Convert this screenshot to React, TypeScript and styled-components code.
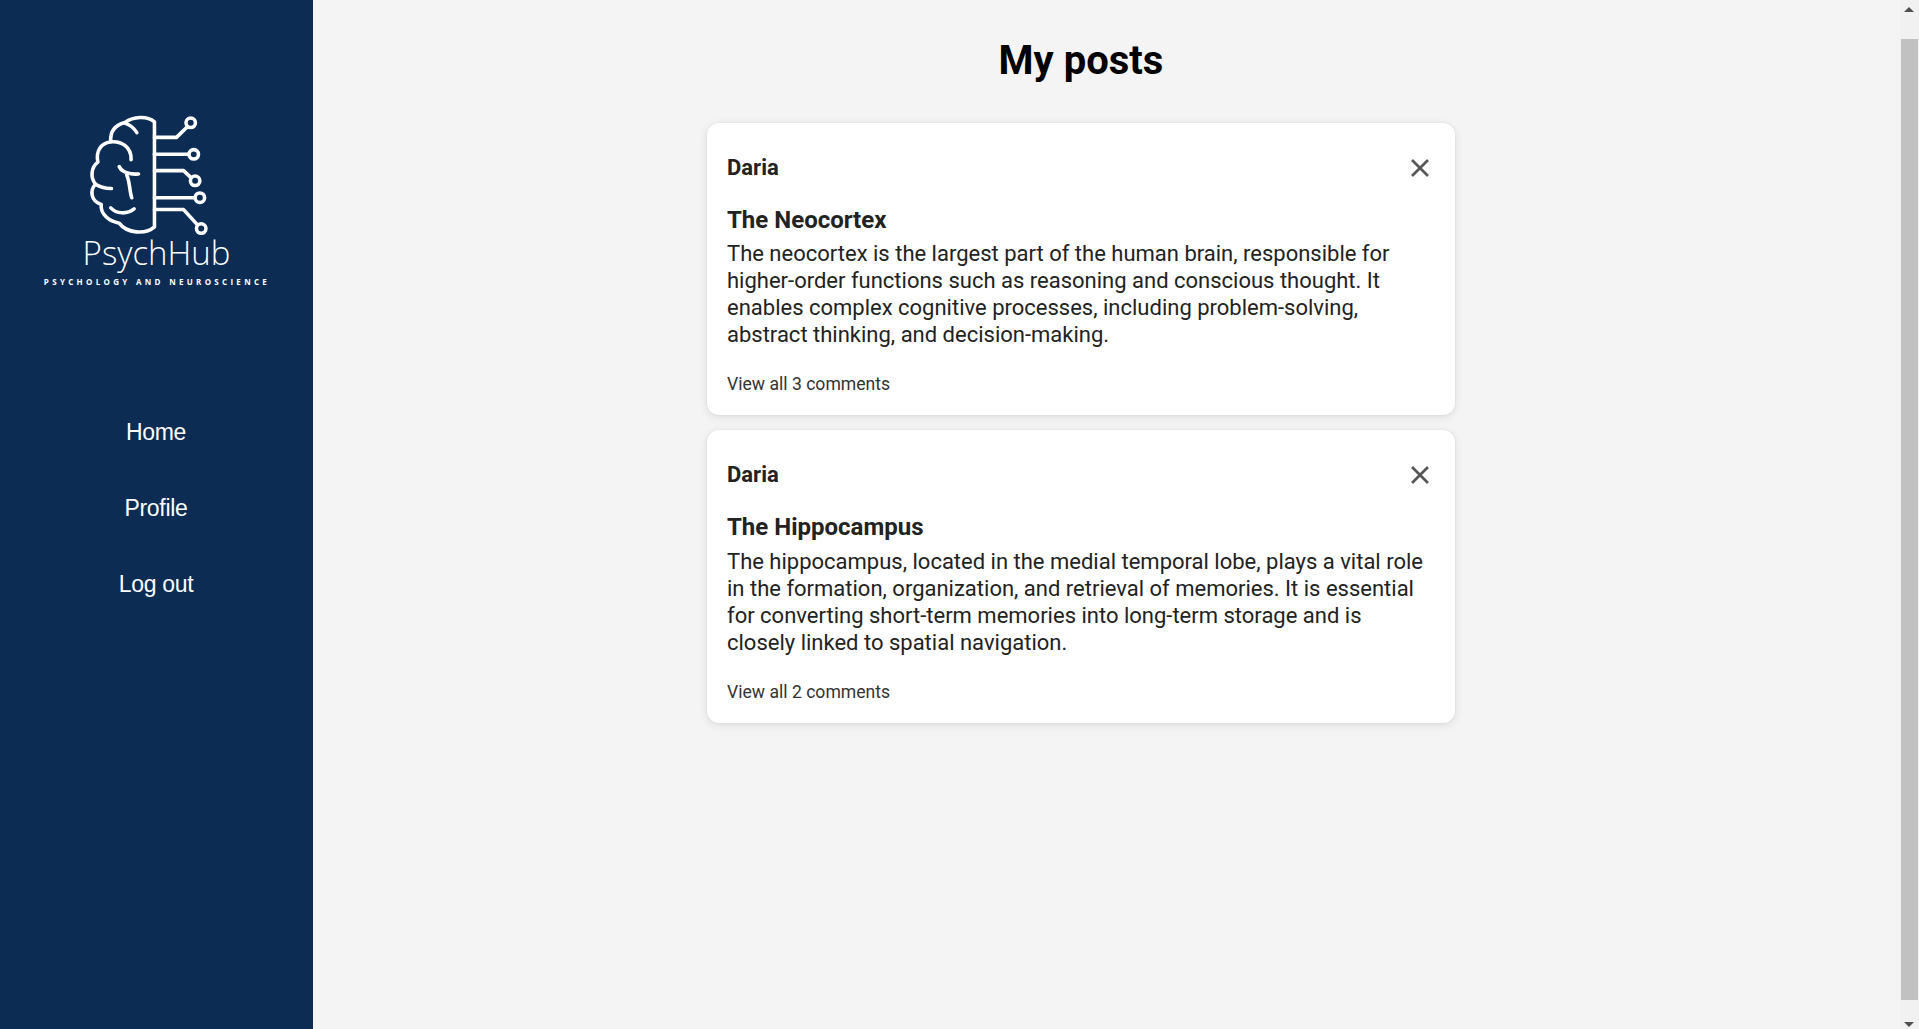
import { createGlobalStyle } from 'styled-components'
import styled from 'styled-components'

const GlobalStyle = createGlobalStyle`
  html, body {
    margin: 0;
    padding: 0;
    height: 100%;
    overflow: hidden;
    background: #f4f4f4;
  }
  * {
    box-sizing: border-box;
  }
`

const Page = styled.div`
  display: flex;
  width: 100%;
  height: 1029px;
  background: #f4f4f4;
`

const Sidebar = styled.aside`
  width: 313px;
  flex-shrink: 0;
  background: #0c2c54;
  display: flex;
  flex-direction: column;
  align-items: center;
  padding-top: 113px;
`

const Logo = styled.div`
  display: flex;
  flex-direction: column;
  align-items: center;
  color: #fff;
`

const Brain = styled.svg`
  width: 122px;
  height: 122px;
  margin-left: -20px;
`

const LogoName = styled.span`
  font-family: 'Open Sans', sans-serif;
  font-size: 33px;
  font-weight: 300;
  line-height: 40px;
  margin-top: -2px;
`

const LogoTag = styled.span`
  font-family: 'Open Sans', sans-serif;
  font-size: 8px;
  font-weight: 700;
  line-height: 12px;
  letter-spacing: 3.3px;
  margin: 3px 0 0 1px;
  white-space: nowrap;
`

const Nav = styled.nav`
  display: flex;
  flex-direction: column;
  align-items: center;
  gap: 50px;
  margin: 131px 1px 0 0;
`

const NavLink = styled.a`
  font-family: 'Liberation Sans', Arial, sans-serif;
  font-size: 23px;
  letter-spacing: -0.3px;
  line-height: 26px;
  color: #fff;
  cursor: pointer;
`

const Main = styled.main`
  flex: 1;
  display: flex;
  flex-direction: column;
  align-items: center;
  padding: 37px 51px 0 0;
`

const Title = styled.h1`
  font-family: Roboto, sans-serif;
  font-size: 40px;
  font-weight: 700;
  line-height: 47px;
  margin: 0 0 39px;
  color: #000;
`

const Posts = styled.div`
  display: flex;
  flex-direction: column;
  gap: 15px;
  width: 748px;
`

const Card = styled.article`
  background: #fff;
  border-radius: 12px;
  box-shadow: 0 2px 10px rgba(0, 0, 0, 0.1), 0 0 2px rgba(0, 0, 0, 0.08);
  padding: 20px;
  font-family: Roboto, sans-serif;
`

const CardHead = styled.div`
  display: flex;
  justify-content: space-between;
  align-items: center;
  height: 50px;
  margin-bottom: 13px;
`

const Author = styled.span`
  font-size: 22px;
  font-weight: 700;
  color: #222;
  margin-bottom: 2px;
`

const CloseButton = styled.button`
  border: none;
  background: none;
  padding: 0;
  display: flex;
  width: 30px;
  height: 30px;
  color: #555;
  cursor: pointer;
`

const PostTitle = styled.h2`
  font-size: 24px;
  font-weight: 700;
  line-height: 29px;
  color: #222;
  margin: 0 0 5.4px;
`

const PostBody = styled.p`
  font-size: 22px;
  line-height: 27px;
  color: #222;
  margin: 0 0 25px;
`

const Comments = styled.a`
  display: block;
  font-size: 17.6px;
  line-height: 22px;
  color: #333;
  cursor: pointer;
`

const Scrollbar = styled.div`
  width: 19px;
  flex-shrink: 0;
  background: #f1f1f1;
  display: flex;
  flex-direction: column;
  align-items: center;
  padding-right: 1px;
`

const ScrollArrow = styled.div<{ $down?: boolean }>`
  width: 0;
  height: 0;
  border-left: 5px solid transparent;
  border-right: 5px solid transparent;
  ${p => (p.$down ? 'border-top: 5px solid #505050;' : 'border-bottom: 5px solid #505050;')}
  margin: ${p => (p.$down ? '0 0 2px' : '7px 0 0')};
`

const ScrollThumb = styled.div`
  width: 17px;
  height: 961px;
  background: #c1c1c1;
  margin: 27px 0 auto;
`

const posts = [
  {
    title: 'The Neocortex',
    body: 'The neocortex is the largest part of the human brain, responsible for higher-order functions such as reasoning and conscious thought. It enables complex cognitive processes, including problem-solving, abstract thinking, and decision-making.',
    comments: 3,
  },
  {
    title: 'The Hippocampus',
    body: 'The hippocampus, located in the medial temporal lobe, plays a vital role in the formation, organization, and retrieval of memories. It is essential for converting short-term memories into long-term storage and is closely linked to spatial navigation.',
    comments: 2,
  },
]

const BrainLogo = () => (
  <Brain viewBox="170 40 360 360" fill="none" stroke="currentColor" strokeWidth={10.5} strokeLinecap="round" strokeLinejoin="round">
    <path d="M372 66 C350 48 310 50 285 68 C262 74 240 90 243 125 C215 130 198 150 205 185 C185 200 182 230 198 250 C180 270 185 300 215 310 C212 340 240 360 268 365 C290 395 345 400 372 376 V66" />
    <path d="M285 70 C300 75 312 85 320 98" />
    <path d="M243 125 C275 122 305 140 303 178" />
    <path d="M198 250 C210 258 228 262 245 263" />
    <path d="M268 198 C275 215 300 222 325 220" />
    <path d="M290 222 C300 245 298 270 305 290" />
    <path d="M243 320 C260 338 290 340 312 323" />
    <path d="M372 112 H437 L470 80" />
    <path d="M372 162 H472" />
    <path d="M372 210 H458 L479 230" />
    <path d="M372 290 H490" />
    <path d="M372 325 H458 L497 368" />
    <circle cx="479" cy="69" r="14" />
    <circle cx="488" cy="162" r="14" />
    <circle cx="492" cy="240" r="14" />
    <circle cx="506" cy="290" r="14" />
    <circle cx="510" cy="381" r="14" />
  </Brain>
)

const App = () => {
  return (
    <Page>
      <GlobalStyle />
      <Sidebar>
        <Logo>
          <BrainLogo />
          <LogoName>PsychHub</LogoName>
          <LogoTag>PSYCHOLOGY AND NEUROSCIENCE</LogoTag>
        </Logo>
        <Nav>
          <NavLink>Home</NavLink>
          <NavLink>Profile</NavLink>
          <NavLink>Log out</NavLink>
        </Nav>
      </Sidebar>
      <Main>
        <Title>My posts</Title>
        <Posts>
          {posts.map(post => (
            <Card key={post.title}>
              <CardHead>
                <Author>Daria</Author>
                <CloseButton aria-label="Delete post">
                  <svg viewBox="0 0 24 24" width="30" height="30" fill="currentColor" stroke="currentColor" strokeWidth={0.25}>
                    <path d="M19 6.41 17.59 5 12 10.59 6.41 5 5 6.41 10.59 12 5 17.59 6.41 19 12 13.41 17.59 19 19 17.59 13.41 12z" />
                  </svg>
                </CloseButton>
              </CardHead>
              <PostTitle>{post.title}</PostTitle>
              <PostBody>{post.body}</PostBody>
              <Comments>View all {post.comments} comments</Comments>
            </Card>
          ))}
        </Posts>
      </Main>
      <Scrollbar>
        <ScrollArrow />
        <ScrollThumb />
        <ScrollArrow $down />
      </Scrollbar>
    </Page>
  )
}

export default App
